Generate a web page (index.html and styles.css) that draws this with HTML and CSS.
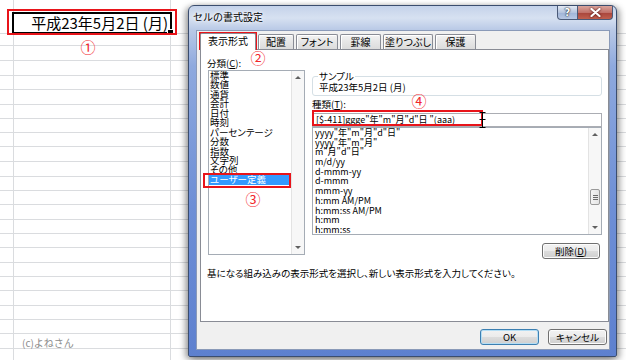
FILE: index.html
```html
<!DOCTYPE html>
<html lang="ja">
<head>
<meta charset="utf-8">
<link rel="stylesheet" href="styles.css">
</head>
<body>
<div class="sheet">
  <div class="row first"><div class="cell">平成23年5月2日 (月)</div></div>
  <div class="row h12"></div>
  <div class="row h15"></div><div class="row h15"></div><div class="row h14"></div><div class="row h15"></div>
  <div class="row h14"></div><div class="row h14"></div><div class="row h14"></div><div class="row h15"></div>
  <div class="row h15"></div><div class="row h14"></div><div class="row h14"></div><div class="row h15"></div>
  <div class="row h14"></div><div class="row h14"></div><div class="row h15"></div><div class="row h14"></div>
  <div class="row h14"></div><div class="row h15"></div><div class="row h14"></div><div class="row h14"></div>
  <div class="row h15 credit-row"><span class="credit">(c)よねさん</span></div>
  <div class="row last"></div>

  <div class="mark box-cell"></div>
  <div class="num n1">①</div>

  <div class="dialog">
    <div class="titlebar">
      <span class="title">セルの書式設定</span>
      <div class="caption-btns">
        <span class="cb help">?</span>
        <span class="cb close"><svg width="11" height="9" viewBox="0 0 11 9"><path d="M1.5 1 L9.5 8 M9.5 1 L1.5 8" stroke="#fff" stroke-width="2.2" stroke-linecap="round"/></svg></span>
      </div>
    </div>
    <div class="client">
      <div class="tabs">
        <div class="tab active">表示形式</div>
        <div class="tab t2">配置</div>
        <div class="tab t3">フォント</div>
        <div class="tab t4">罫線</div>
        <div class="tab t5">塗りつぶし</div>
        <div class="tab t6">保護</div>
      </div>
      <div class="page">
        <div class="cols">
          <div class="leftcol">
            <div class="label">分類(<u>C</u>):</div>
            <div class="listbox cat">
              <ul class="items">
                <li>標準</li><li>数値</li><li>通貨</li><li>会計</li><li>日付</li><li>時刻</li>
                <li>パーセンテージ</li><li>分数</li><li>指数</li><li>文字列</li><li>その他</li>
                <li class="sel">ユーザー定義</li>
              </ul>
              <div class="vscroll">
                <span class="arrow up"></span>
                <span class="track"></span>
                <span class="arrow down"></span>
              </div>
            </div>
          </div>
          <div class="rightcol">
            <div class="sample">
              <span class="legend">サンプル</span>
              <div class="sample-val">平成23年5月2日 (月)</div>
            </div>
            <div class="label type-label">種類(<u>T</u>):</div>
            <div class="input">[$-411]ggge"年"m"月"d"日 "(aaa)</div>
            <div class="listbox types">
              <ul class="items">
                <li>yyyy"年"m"月"d"日"</li>
                <li>yyyy"年"m"月"</li>
                <li>m"月"d"日"</li>
                <li>m/d/yy</li>
                <li>d-mmm-yy</li>
                <li>d-mmm</li>
                <li>mmm-yy</li>
                <li>h:mm AM/PM</li>
                <li>h:mm:ss AM/PM</li>
                <li>h:mm</li>
                <li>h:mm:ss</li>
              </ul>
              <div class="vscroll">
                <span class="arrow up"></span>
                <span class="track t-upper"></span>
                <span class="thumb"><i></i><i></i><i></i></span>
                <span class="track t-lower"></span>
                <span class="arrow down"></span>
              </div>
            </div>
            <div class="btnrow"><button class="btn">削除(<u>D</u>)</button></div>
          </div>
        </div>
        <p class="desc">基になる組み込みの表示形式を選択し、新しい表示形式を入力してください。</p>
      </div>
      <div class="footer">
        <button class="btn ok">OK</button>
        <button class="btn">キャンセル</button>
      </div>
    </div>

    <div class="mark box-tab"></div>
    <div class="num n2">②</div>
    <div class="mark box-sel"></div>
    <div class="num n3">③</div>
    <div class="mark box-input"></div>
    <div class="num n4">④</div>
    <svg class="ibeam" width="7" height="16" viewBox="0 0 7 16"><path d="M0.5 0.5h6M3.5 0.5v15M0.5 15.5h6M0.5 7.5h6" stroke="#000" stroke-width="1" fill="none"/></svg>
  </div>
</div>
</body>
</html>
```

FILE: styles.css
```css
* { box-sizing: border-box; }
html, body { margin: 0; padding: 0; }
body {
  width: 626px;
  height: 360px;
  overflow: hidden;
  background: #fff;
  font-family: "Noto Sans CJK JP", "Noto Sans", sans-serif;
  color: #000;
}
ul { margin: 0; padding: 0; list-style: none; }
p { margin: 0; }
u { text-decoration: underline; }

.sheet {
  position: relative;
  width: 626px;
  height: 360px;
  display: flex;
  flex-direction: column;
  background-image:
    linear-gradient(#dadcdf, #dadcdf),
    linear-gradient(#dadcdf, #dadcdf);
  background-size: 1px 100%, 1px 100%;
  background-position: 13px 0, 170px 0;
  background-repeat: no-repeat;
}
.row { flex: none; border-bottom: 1px solid #dadcdf; }
.row.first { height: 34px; padding-top: 12px; }
.row.h12 { height: 12px; }
.row.h14 { height: 14px; }
.row.h15 { height: 15px; }
.row.last { flex: 1; border-bottom: none; }

.cell {
  margin-left: 12px;
  width: 160px;
  height: 22px;
  border: 2px solid #000;
  background: #fff;
  text-align: right;
  font-size: 15px;
  line-height: 18px;
  padding-right: 2px;
  position: relative;
  white-space: nowrap;
}
.cell::after {
  content: "";
  position: absolute;
  right: -4px;
  bottom: -4px;
  width: 5px;
  height: 5px;
  background: #000;
  border: 1px solid #fff;
}

.credit-row { position: relative; }
.credit {
  position: absolute;
  left: 22px;
  top: 3px;
  font-size: 10px;
  line-height: 12px;
  color: #8c8c8c;
}

.mark {
  position: absolute;
  border: 2px solid #e8141a;
  pointer-events: none;
}
.num {
  position: absolute;
  color: #f2262b;
  font-size: 15px;
  line-height: 16px;
  width: 16px;
  text-align: center;
}
.box-cell { left: 7px; top: 9px; width: 170px; height: 26px; }
.n1 { left: 80px; top: 39px; }

/* dialog window */
.dialog {
  position: absolute;
  left: 188px;
  top: 5px;
  width: 429px;
  height: 352px;
  border: 1px solid #3b4d6e;
  border-radius: 6px 6px 2px 2px;
  background: linear-gradient(to bottom, #c4d2ea 0px, #d7e1f1 12px, #b9c9e6 24px, #8ea9de 60px, #6e8fd6 200px, #5d80cf 352px);
  box-shadow: -3px 2px 6px rgba(0,0,0,0.35), 3px 2px 6px rgba(0,0,0,0.35);
  padding: 0 6px 6px 7px;
  display: flex;
  flex-direction: column;
}
.titlebar {
  height: 24px;
  flex: none;
  display: flex;
  align-items: flex-start;
  justify-content: space-between;
}
.title {
  font-size: 10px;
  line-height: 12px;
  margin-top: 5px;
  margin-left: -3px;
  color: #000;
  text-shadow: 0 0 6px #fff, 0 0 3px #fff;
}
.caption-btns { display: flex; margin-top: 0px; margin-right: -3px; }
.cb {
  height: 14px;
  display: flex;
  align-items: center;
  justify-content: center;
  border: 1px solid #4a5a78;
  border-top: none;
}
.help {
  width: 21px;
  border-radius: 0 0 0 4px;
  background: linear-gradient(#e3e9f3, #b5c4de 50%, #9fb3d6 51%, #b8c8e4);
  font-size: 10px;
  font-weight: bold;
  color: #fff;
  text-shadow: 0 0 2px #223, 0 0 1px #000;
  font-family: "DejaVu Sans", sans-serif;
}
.close {
  width: 35px;
  border-left: none;
  border-radius: 0 0 4px 0;
  background: linear-gradient(#d9a49c, #c2726a 50%, #a8443b 51%, #c0604f);
}
.close svg { filter: drop-shadow(0 0 1px #400); }

.client {
  flex: 1;
  background: #f0f0f0;
  border: 1px solid #8a9ab8;
  padding: 2px 1px 0 3px;
  display: flex;
  flex-direction: column;
  font-size: 9.5px;
  font-feature-settings: "palt";
}
.tabs { display: flex; height: 16px; align-items: flex-end; position: relative; z-index: 1; }
.tab {
  height: 15px;
  border: 1px solid #898c95;
  border-bottom: none;
  border-radius: 2px 2px 0 0;
  background: linear-gradient(#f3f3f3, #e6e6e6 50%, #dcdcdc);
  box-shadow: inset 1px 1px 0 #fff;
  font-size: 10px;
  line-height: 13px;
  text-align: center;
  margin-left: 2px;
}
.tab.active {
  width: 56px;
  margin-left: 0;
  background: #fff;
  box-shadow: none;
  margin-bottom: -1px;
  height: 17px;
}
.t2 { width: 36px; }
.t3 { width: 42px; }
.t4 { width: 41px; }
.t5 { width: 50px; }
.t6 { width: 41px; }

.page {
  width: 409px;
  height: 273px;
  background: #fff;
  border: 1px solid #898c95;
  padding: 8px 6px 0 6px;
  flex: none;
}
.cols { display: flex; gap: 7px; }
.leftcol { width: 98px; flex: none; }
.rightcol { flex: 1; display: flex; flex-direction: column; margin-top: 18px; }
.label { font-size: 9.5px; line-height: 11px; height: 12px; }

.listbox {
  border: 1px solid #a5acb5;
  background: #fff;
  display: flex;
  position: relative;
}
.listbox .items { flex: 1; overflow: hidden; }
.cat { height: 185px; margin-left: 1px; }
.cat .items li { font-size: 9.5px; line-height: 9.45px; height: 9.45px; padding-left: 1px; white-space: nowrap; }
.cat .items li.sel { background: #3399ff; color: #fff; margin-right: 2px; height: 11px; line-height: 11px; margin-top: -0.5px; }
.types { height: 108px; }
.types .items li { font-size: 9px; line-height: 9.7px; height: 9.7px; padding-left: 2px; white-space: nowrap; }

.vscroll {
  width: 13px;
  flex: none;
  border-left: 1px solid #e3e3e3;
  background: #f7f7f7;
  display: flex;
  flex-direction: column;
}
.arrow { height: 13px; flex: none; position: relative; }
.arrow::after {
  content: "";
  position: absolute;
  left: 3px;
  top: 5px;
  border-left: 3px solid transparent;
  border-right: 3px solid transparent;
}
.arrow.up::after { border-bottom: 3px solid #606060; }
.arrow.down::after { border-top: 3px solid #606060; }
.track { flex: 1; }
.t-upper { flex: none; height: 48px; }
.t-lower { flex: 1; }
.thumb {
  height: 16px;
  margin: 0 1px;
  border: 1px solid #9a9a9a;
  border-radius: 2px;
  background: linear-gradient(to right, #f4f4f4, #e4e4e4);
  display: flex;
  flex-direction: column;
  align-items: center;
  justify-content: center;
  gap: 1px;
}
.thumb i { display: block; width: 5px; height: 1px; background: #6a6a6a; }

.sample {
  position: relative;
  border: 1px solid #d5dfe5;
  border-radius: 3px;
  height: 20px;
  padding: 5px 0 0 6px;
}
.legend {
  position: absolute;
  left: 5px;
  top: -7px;
  background: #fff;
  padding: 0 1px;
  line-height: 12px;
  font-size: 9.5px;
}
.sample-val { font-size: 9.5px; line-height: 10px; }
.type-label { margin-top: 3px; }
.input {
  margin-top: 2px;
  height: 14px;
  flex: none;
  border: 1px solid #abadb3;
  background: #fff;
  font-size: 9px;
  line-height: 12px;
  padding-left: 3px;
  white-space: nowrap;
}
.btnrow { display: flex; justify-content: flex-end; margin-top: 8px; padding-right: 2px; }

.btn {
  font-family: inherit;
  font-size: 9.5px;
  font-feature-settings: "palt";
  height: 16px;
  width: 58px;
  padding: 0;
  line-height: 13px;
  border: 1px solid #707070;
  border-radius: 3px;
  background: linear-gradient(#f2f2f2, #ebebeb 50%, #dddddd 51%, #cfcfcf);
  box-shadow: inset 0 0 0 1px #fcfcfc;
  color: #000;
}
.desc { margin-top: 9px; font-size: 9.5px; line-height: 11px; white-space: nowrap; }

.footer { display: flex; justify-content: flex-end; gap: 9px; padding-top: 7px; padding-right: 1px; }
.footer .btn { width: 59px; }
.btn.ok { border-color: #3c7fb1; box-shadow: inset 0 0 0 1px #b4def5; }

.box-tab { left: 10px; top: 26px; width: 58px; height: 18px; }
.n2 { left: 61px; top: 44px; }
.box-sel { left: 14px; top: 167px; width: 88px; height: 15px; }
.n3 { left: 56px; top: 185px; }
.box-input { left: 123px; top: 104px; width: 171px; height: 16px; }
.n4 { left: 222px; top: 87px; }
.ibeam { position: absolute; left: 290px; top: 106px; }
```
